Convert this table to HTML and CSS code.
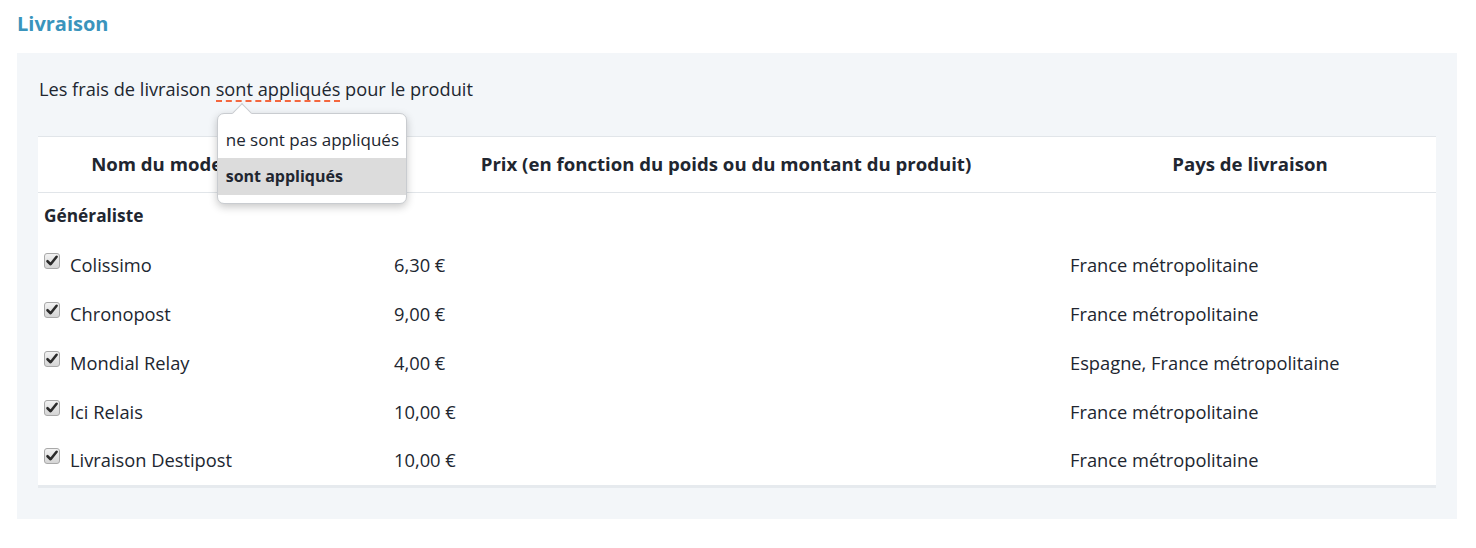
FILE: index.html
```html
<!DOCTYPE html>
<html lang="fr">
<head>
<meta charset="utf-8">
<link rel="stylesheet" href="styles.css">
</head>
<body>
<h2 class="title">Livraison</h2>
<div class="panel">
  <p class="intro">Les frais de livraison <span class="choice">sont appliqués<span class="menu"><span class="menu-item">ne sont pas appliqués</span><span class="menu-item active">sont appliqués</span></span></span> pour le produit</p>
  <table class="ship">
    <colgroup><col class="c1"><col class="c2"><col class="c3"></colgroup>
    <thead>
      <tr><th>Nom du mode de livraison</th><th>Prix (en fonction du poids ou du montant du produit)</th><th>Pays de livraison</th></tr>
    </thead>
    <tbody>
      <tr class="group"><td colspan="3">Généraliste</td></tr>
      <tr><td><span class="check"><svg viewBox="0 0 16 16" width="16" height="16"><path d="M3.5 8.2 L6.6 11.2 L12.6 3.8" fill="none" stroke="#2b2b2b" stroke-width="2.6" stroke-linecap="round" stroke-linejoin="round"/></svg></span>Colissimo</td><td>6,30 €</td><td>France métropolitaine</td></tr>
      <tr><td><span class="check"><svg viewBox="0 0 16 16" width="16" height="16"><path d="M3.5 8.2 L6.6 11.2 L12.6 3.8" fill="none" stroke="#2b2b2b" stroke-width="2.6" stroke-linecap="round" stroke-linejoin="round"/></svg></span>Chronopost</td><td>9,00 €</td><td>France métropolitaine</td></tr>
      <tr><td><span class="check"><svg viewBox="0 0 16 16" width="16" height="16"><path d="M3.5 8.2 L6.6 11.2 L12.6 3.8" fill="none" stroke="#2b2b2b" stroke-width="2.6" stroke-linecap="round" stroke-linejoin="round"/></svg></span>Mondial Relay</td><td>4,00 €</td><td>Espagne, France métropolitaine</td></tr>
      <tr><td><span class="check"><svg viewBox="0 0 16 16" width="16" height="16"><path d="M3.5 8.2 L6.6 11.2 L12.6 3.8" fill="none" stroke="#2b2b2b" stroke-width="2.6" stroke-linecap="round" stroke-linejoin="round"/></svg></span>Ici Relais</td><td>10,00 €</td><td>France métropolitaine</td></tr>
      <tr><td><span class="check"><svg viewBox="0 0 16 16" width="16" height="16"><path d="M3.5 8.2 L6.6 11.2 L12.6 3.8" fill="none" stroke="#2b2b2b" stroke-width="2.6" stroke-linecap="round" stroke-linejoin="round"/></svg></span>Livraison Destipost</td><td>10,00 €</td><td>France métropolitaine</td></tr>
    </tbody>
  </table>
</div>
</body>
</html>
```

FILE: styles.css
```css
* { box-sizing: border-box; }
body {
  margin: 0;
  padding: 0 19px 0 17px;
  font-family: "Open Sans", "Lato", sans-serif;
  color: #212630;
  background: #fff;
}
.title {
  margin: 0;
  padding-top: 11px;
  height: 53px;
  font-size: 20px;
  font-weight: 700;
  color: #3a94bc;
  line-height: 26px;
}
.panel {
  background: #f3f6f9;
  padding: 24px 21px 31px 21px;
}
.intro {
  margin: 0 0 34px 1px;
  font-size: 18.2px;
  line-height: 24px;
}
.choice {
  position: relative;
  display: inline-block;
  border-bottom: 2px dashed #f4673e;
  line-height: 21px;
}
.menu {
  position: absolute;
  left: 1px;
  top: 34px;
  width: 190px;
  background: #fff;
  border: 1px solid #c9ccd0;
  border-radius: 7px;
  box-shadow: 0 3px 9px rgba(0,0,0,0.22);
  padding: 7px 0 8px;
  display: flex;
  flex-direction: column;
  z-index: 5;
}
.menu::before {
  content: "";
  position: absolute;
  left: 17px;
  top: -8px;
  width: 13px;
  height: 13px;
  background: #fff;
  border-left: 1px solid #c9ccd0;
  border-top: 1px solid #c9ccd0;
  transform: rotate(45deg);
}
.menu-item {
  position: relative;
  display: block;
  height: 37px;
  line-height: 37px;
  padding-left: 8px;
  font-size: 17px;
  white-space: nowrap;
}
.menu-item.active {
  background: #dcdcdc;
  font-weight: 700;
  font-size: 16px;
}
.ship {
  width: 100%;
  border-collapse: collapse;
  background: #fff;
  border-top: 1px solid #e1e5e9;
  border-bottom: 3px solid #e6eaee;
  font-size: 18.3px;
}
.c1 { width: 350px; }
.c2 { width: 676px; }
.c3 { width: 372px; }
.ship th {
  height: 56px;
  font-weight: 700;
  font-size: 18.6px;
  text-align: center;
  border-bottom: 1px solid #e1e5e9;
  padding: 0 6px 3px;
}
.ship td {
  padding: 0 6px 3px;
  height: 49px;
  text-align: left;
  vertical-align: middle;
}
.ship tr.group td {
  font-weight: 700;
  font-size: 17.3px;
}
.check {
  display: inline-block;
  vertical-align: -1px;
  width: 16px;
  height: 16px;
  margin-right: 10px;
  border: 1px solid #a9a9a9;
  border-radius: 3px;
  background: linear-gradient(#f2f2f2, #d5d5d5);
  position: relative;
  top: -4px;
}
.check svg { display: block; margin: -1px 0 0 -1px; }
```
